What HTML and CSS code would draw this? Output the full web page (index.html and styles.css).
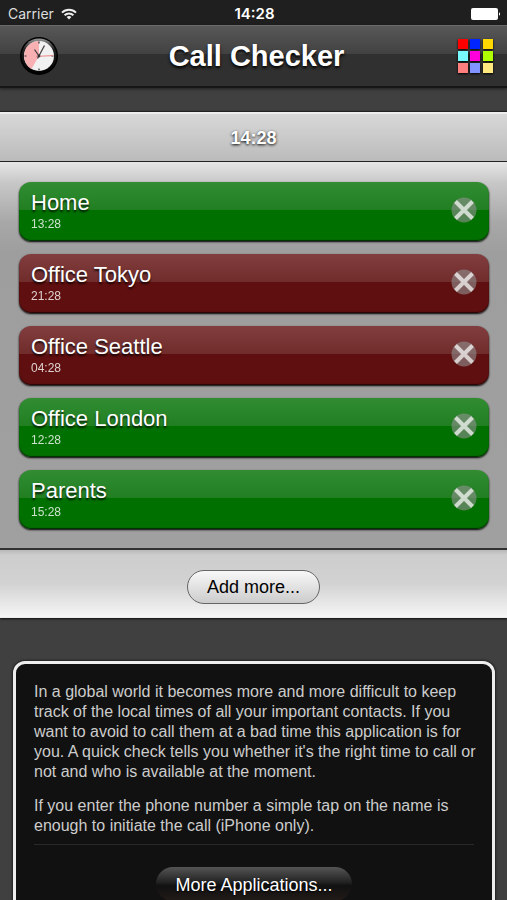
FILE: index.html
```
<!DOCTYPE html>
<html lang="en">

<head>
    <meta charset="UTF-8">
    <meta name="viewport" content="width=device-width, initial-scale=1.0">
    <title>Call Checker</title>

    <link rel="stylesheet" href="styles.css">
</head>

<body>
    <div class="status-bar">
        <div class="carrier">
            <span>Carrier</span>
            <svg class="wifi" viewBox="0 0 16 12" width="16" height="12" fill="none" stroke="#eee" stroke-width="2">
                <path d="M1 4.6a10 10 0 0 1 14 0M3.6 7.3a6.3 6.3 0 0 1 8.8 0" />
                <path d="M8 11.5L5.6 9.1a3.4 3.4 0 0 1 4.8 0z" fill="#eee" stroke="none" />
            </svg>
        </div>
        <div class="status-time">14:28</div>
        <svg class="battery" viewBox="0 0 30 12" width="30" height="12" fill="#fff">
            <rect x="0" y="0" width="27" height="12" rx="2" />
            <path d="M28 4.2a2 2 0 0 1 0 3.6z" />
        </svg>
    </div>

    <header class="toolbar">
        <button type="button" class="icon-btn" aria-label="Clock">
            <svg viewBox="0 0 40 40" width="40" height="40">
                <defs>
                    <linearGradient id="rim" x1="0" y1="0" x2="0" y2="1">
                        <stop offset="0" stop-color="#999" />
                        <stop offset="0.3" stop-color="#222" />
                        <stop offset="1" stop-color="#000" />
                    </linearGradient>
                </defs>
                <circle cx="20" cy="20" r="19" fill="#000" />
                <circle cx="20" cy="20" r="17.5" fill="url(#rim)" />
                <circle cx="20" cy="20" r="15" fill="#f1f1f1" />
                <path d="M20 20V5a15 15 0 0 0-7.5 28z" fill="#f8b0b3" />
                <path d="M20 5.5v2M20 32.5v2M5.5 20h2M32.5 20h2" stroke="#333" stroke-width="1.2" />
                <path d="M17 20.4L34 19.6" stroke="#ee8589" stroke-width="1" />
                <path d="M20 20L15.5 13.5M18.5 22.5L25.5 9.5" stroke="#484040" stroke-width="1.3" />
                <circle cx="20" cy="20" r="1.4" fill="#333" />
            </svg>
        </button>
        <h1>Call Checker</h1>
        <button type="button" class="icon-btn" aria-label="Colors">
            <svg class="swatches" viewBox="0 0 36 36" width="36" height="36">
                <rect x="0" y="1" width="10" height="10" fill="#f00" />
                <rect x="12" y="1" width="10" height="10" fill="#0025ff" />
                <rect x="25" y="1" width="10" height="10" fill="#ffd800" />
                <rect x="0" y="13" width="10" height="10" fill="#78fbff" />
                <rect x="12" y="13" width="10" height="10" fill="#ff00dc" />
                <rect x="25" y="13" width="10" height="10" fill="#b0ff00" />
                <rect x="0" y="25" width="10" height="10" fill="#ff7f7f" />
                <rect x="12" y="25" width="10" height="10" fill="#8292ff" />
                <rect x="25" y="25" width="10" height="10" fill="#ffe97f" />
            </svg>
        </button>
    </header>

    <main>
        <div class="time-bar">14:28</div>

        <ul class="contacts">
            <li class="contact available">
                <div>
                    <div class="name">Home</div>
                    <div class="local-time">13:28</div>
                </div>
                <button type="button" class="remove" aria-label="Remove Home">
                    <svg viewBox="0 0 26 26" width="26" height="26"><circle cx="13" cy="13" r="12.5" /><path d="M4.5 4.5l17 17M21.5 4.5l-17 17" /></svg>
                </button>
            </li>
            <li class="contact busy">
                <div>
                    <div class="name">Office Tokyo</div>
                    <div class="local-time">21:28</div>
                </div>
                <button type="button" class="remove" aria-label="Remove Office Tokyo">
                    <svg viewBox="0 0 26 26" width="26" height="26"><circle cx="13" cy="13" r="12.5" /><path d="M4.5 4.5l17 17M21.5 4.5l-17 17" /></svg>
                </button>
            </li>
            <li class="contact busy">
                <div>
                    <div class="name">Office Seattle</div>
                    <div class="local-time">04:28</div>
                </div>
                <button type="button" class="remove" aria-label="Remove Office Seattle">
                    <svg viewBox="0 0 26 26" width="26" height="26"><circle cx="13" cy="13" r="12.5" /><path d="M4.5 4.5l17 17M21.5 4.5l-17 17" /></svg>
                </button>
            </li>
            <li class="contact available">
                <div>
                    <div class="name">Office London</div>
                    <div class="local-time">12:28</div>
                </div>
                <button type="button" class="remove" aria-label="Remove Office London">
                    <svg viewBox="0 0 26 26" width="26" height="26"><circle cx="13" cy="13" r="12.5" /><path d="M4.5 4.5l17 17M21.5 4.5l-17 17" /></svg>
                </button>
            </li>
            <li class="contact available">
                <div>
                    <div class="name">Parents</div>
                    <div class="local-time">15:28</div>
                </div>
                <button type="button" class="remove" aria-label="Remove Parents">
                    <svg viewBox="0 0 26 26" width="26" height="26"><circle cx="13" cy="13" r="12.5" /><path d="M4.5 4.5l17 17M21.5 4.5l-17 17" /></svg>
                </button>
            </li>
        </ul>

        <div class="add-bar">
            <button type="button" class="pill add-btn">Add more...</button>
        </div>

        <section class="info">
            <p>In a global world it becomes more and more difficult to keep track of the local times of all your important contacts. If you want to avoid to call them at a bad time this application is for you. A quick check tells you whether it's the right time to call or not and who is available at the moment.</p>
            <p>If you enter the phone number a simple tap on the name is enough to initiate the call (iPhone only).</p>
            <hr>
            <button type="button" class="pill more-btn">More Applications...</button>
        </section>
    </main>
</body>

</html>
```

FILE: styles.css
```
* {
    box-sizing: border-box;
}

html {
    height: 100%;
    overflow: hidden;
}

body {
    height: 100%;
    margin: 0;
    overflow: hidden;
    background: #404040;
    font-family: "Liberation Sans", Arial, sans-serif;
}

button {
    padding: 0;
    border: 0;
    background: none;
    font-family: inherit;
    cursor: pointer;
}

svg {
    display: block;
}

/* status bar */
.status-bar {
    display: grid;
    grid-template-columns: 1fr auto 1fr;
    align-items: center;
    height: 25px;
    padding: 2px 6px 0 8px;
    background: #1f1f1f;
    color: #fff;
    font-family: Inter, sans-serif;
    font-size: 14px;
}

.carrier {
    display: flex;
    align-items: center;
    gap: 7px;
    color: #ddd;
}

.status-time {
    font-size: 15px;
    font-weight: 600;
}

.battery {
    justify-self: end;
}

/* toolbar */
.toolbar {
    display: grid;
    grid-template-columns: 1fr auto 1fr;
    align-items: center;
    height: 63px;
    padding: 0 13px 0 19px;
    border-top: 1px solid #6a6a6a;
    border-bottom: 2px solid #161616;
    background: linear-gradient(#575757, #424242 46%, #303030 46%, #303030);
    box-shadow: 0 1px 3px rgba(0, 0, 0, 0.5);
}

.toolbar h1 {
    margin: 0;
    color: #fff;
    font-size: 29px;
    text-shadow: 0 2px 3px #000;
}

.icon-btn {
    justify-self: start;
}

.icon-btn:last-child {
    justify-self: end;
}

.swatches {
    filter: drop-shadow(0 1px 1px #000);
}

/* current time */
.time-bar {
    margin-top: 24px;
    height: 50px;
    border-top: 2px solid #eee;
    border-bottom: 1px solid #222;
    background: linear-gradient(#d8d8d8, #bbb);
    box-shadow: 0 -1px 1px #222;
    color: #fff;
    font-size: 18px;
    font-weight: bold;
    line-height: 48px;
    text-align: center;
    text-shadow: 0 1px 3px #000;
}

/* contacts */
.contacts {
    display: flex;
    flex-direction: column;
    gap: 13px;
    margin: 0;
    padding: 20px 18px 19px 19px;
    border-bottom: 2px solid #333;
    background: linear-gradient(#e6e6e6, #c8c8c8 20px, #a8a8a8 60px, #9e9e9e 90px, #a0a0a0);
    list-style: none;
}

.contact {
    display: flex;
    justify-content: space-between;
    align-items: center;
    height: 59px;
    padding: 0 12px;
    border-radius: 12px;
    box-shadow: 0 1px 2px #000, inset 0 -1px 1px rgba(0, 0, 0, 0.6);
    color: #fff;
}

.available {
    background: linear-gradient(#328d32, #217e21 48%, #007000 48%, #007000);
}

.busy {
    background: linear-gradient(#823e3e, #702b2b 48%, #5f0f0f 48%, #5f0f0f);
}

.name {
    font-size: 22px;
    line-height: 26px;
    text-shadow: 0 2px 2px rgba(0, 0, 0, 0.8);
}

.local-time {
    padding-bottom: 2px;
    font-size: 12px;
    line-height: 16px;
    opacity: 0.8;
}

.remove {
    margin-bottom: 4px;
}

.remove circle {
    fill: rgba(145, 145, 145, 0.6);
}

.remove path {
    stroke: rgba(255, 255, 255, 0.7);
    stroke-width: 4;
}

/* add button */
.pill {
    height: 34px;
    padding: 2px 19px 0;
    border-radius: 17px;
    font-size: 18px;
}

.add-bar {
    display: flex;
    justify-content: center;
    align-items: center;
    height: 68px;
    border-bottom: 1px solid #eee;
    background: linear-gradient(#b8b8b8, #cdcdcd 5px, #d2d2d2 50%, #f6f6f6);
    box-shadow: 0 1px 2px #111;
}

.add-btn {
    margin-top: 6px;
    border: 1px solid #666;
    background: linear-gradient(#f8f8f8, #ccc);
    color: #000;
}

/* description */
.info {
    margin: 43px 12px 0 13px;
    padding: 18px 18px 24px;
    border: 3px solid #eee;
    border-radius: 12px;
    background: #111;
    box-shadow: 0 0 3px #000;
    color: #ccc;
    font-size: 16px;
    line-height: 20px;
}

.info p {
    margin: 0 -6px 14px 0;
}

.info hr {
    margin: -6px 0 22px;
    border: 0;
    border-top: 1px solid #292929;
}

.more-btn {
    display: block;
    margin: 0 auto;
    background: linear-gradient(#555, #222 45%, #111 55%, #221b18);
    color: #fff;
    text-shadow: 0 1px 2px #000;
}
```
